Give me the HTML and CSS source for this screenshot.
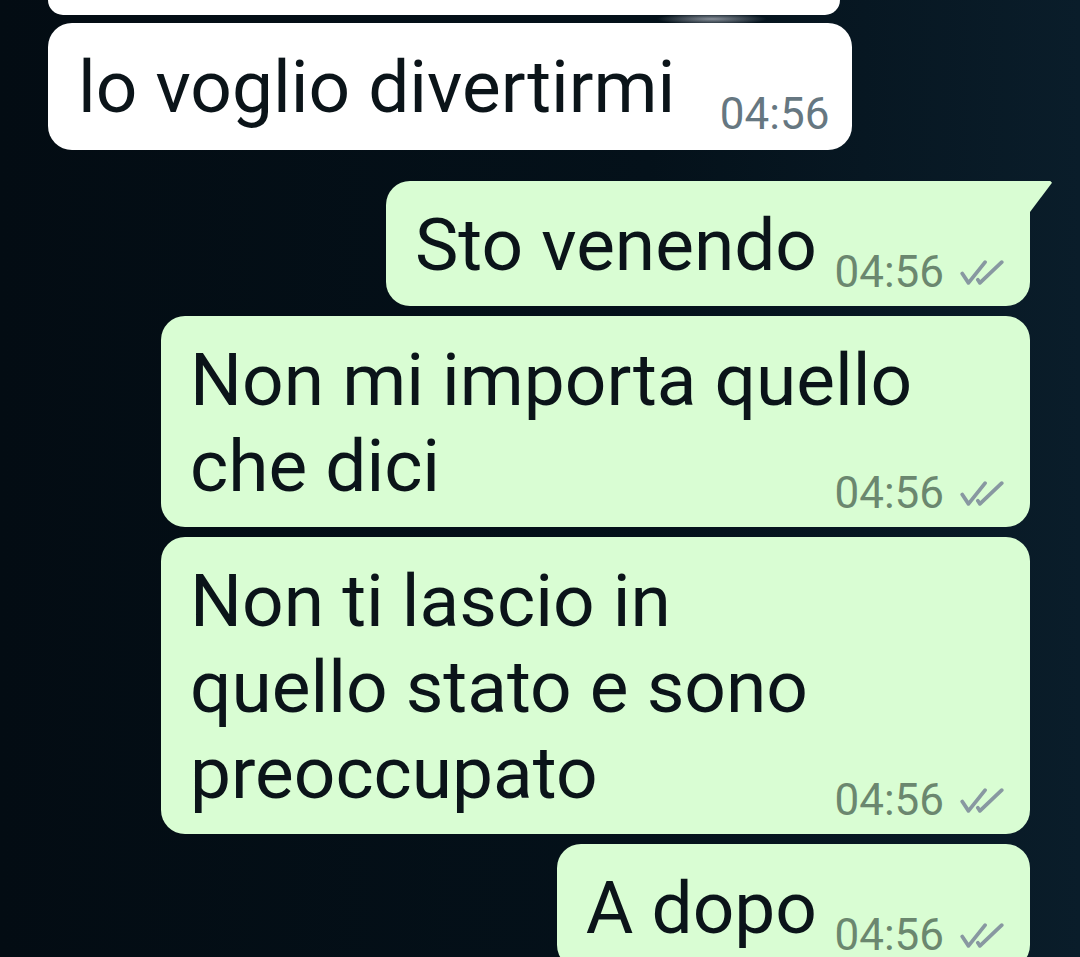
FILE: index.html
```html
<!DOCTYPE html>
<html lang="it">

<head>
    <meta charset="UTF-8">
    <title>Chat</title>
    <link rel="stylesheet" href="styles.css">
</head>

<body>
    <div class="chat">
        <!-- messaggio precedente, tagliato dallo scroll -->
        <div class="bubble in cut"></div>

        <div class="bubble in">
            <p class="text">lo voglio divertirmi<span class="spacer"></span></p>
            <span class="meta">04:56</span>
        </div>

        <div class="bubble out tail">
            <p class="text">Sto venendo<span class="spacer"></span></p>
            <span class="meta">04:56
                <svg class="ticks" viewBox="0 0 43 26"><path d="M2 14 L8 23 L24 3 M17 20 L19 23 L40 3"/></svg>
            </span>
        </div>

        <div class="bubble out full">
            <p class="text">Non mi importa quello<br>che dici<span class="spacer"></span></p>
            <span class="meta">04:56
                <svg class="ticks" viewBox="0 0 43 26"><path d="M2 14 L8 23 L24 3 M17 20 L19 23 L40 3"/></svg>
            </span>
        </div>

        <div class="bubble out full">
            <p class="text">Non ti lascio in<br>quello stato e sono<br>preoccupato<span class="spacer"></span></p>
            <span class="meta">04:56
                <svg class="ticks" viewBox="0 0 43 26"><path d="M2 14 L8 23 L24 3 M17 20 L19 23 L40 3"/></svg>
            </span>
        </div>

        <div class="bubble out">
            <p class="text">A dopo<span class="spacer"></span></p>
            <span class="meta">04:56
                <svg class="ticks" viewBox="0 0 43 26"><path d="M2 14 L8 23 L24 3 M17 20 L19 23 L40 3"/></svg>
            </span>
        </div>
    </div>
</body>

</html>
```

FILE: styles.css
```css
body {
    margin: 0;
    height: 957px;
    overflow: hidden;
    font-family: Roboto, "Liberation Sans", sans-serif;
    background:
        radial-gradient(ellipse 55px 6px at 712px 19px, rgba(190, 195, 205, 0.7), transparent),
        linear-gradient(90deg, #030c13 0%, #04111a 60%, #0a1d2a 100%);
}

.chat {
    display: flex;
    flex-direction: column;
    padding: 0 50px 0 48px;
}

.bubble {
    display: grid;
    position: relative;
    padding: 21px 25px 18px 29px;
    border-radius: 24px;
    color: #0b1419;
}

.in {
    align-self: flex-start;
    background: #ffffff;
    padding: 21px 23px 20px 30px;
}

.out {
    align-self: flex-end;
    background: #d9fdd3;
}

.in + .in {
    margin-top: 8px;
}

.in + .out {
    margin-top: 31px;
}

.out + .out {
    margin-top: 10px;
}

.cut {
    width: 792px;
    height: 15px;
    padding: 0;
    border-radius: 0 0 24px 24px;
}

.full {
    width: 815px;
}

.tail {
    border-top-right-radius: 0;
}

.tail::after {
    content: "";
    position: absolute;
    left: 100%;
    top: 0;
    width: 22px;
    height: 31px;
    background: #d9fdd3;
    clip-path: polygon(0 0, 92% 0, 100% 6%, 0 100%);
}

.text {
    grid-area: 1 / 1;
    margin: 0;
    font-size: 73px;
    line-height: 86px;
}

.spacer {
    display: inline-block;
    width: 188px;
}

.in .spacer {
    width: 154px;
}

.meta {
    grid-area: 1 / 1;
    align-self: end;
    justify-self: end;
    display: inline-flex;
    align-items: center;
    margin-bottom: -5px;
    font-size: 44px;
    line-height: 42px;
    color: #6b876f;
}

.in .meta {
    color: #667781;
}

.ticks {
    width: 45px;
    height: 27px;
    margin-left: 16px;
    fill: none;
    stroke: #8898a1;
    stroke-width: 3.6;
    stroke-linecap: round;
    stroke-linejoin: round;
}
```
